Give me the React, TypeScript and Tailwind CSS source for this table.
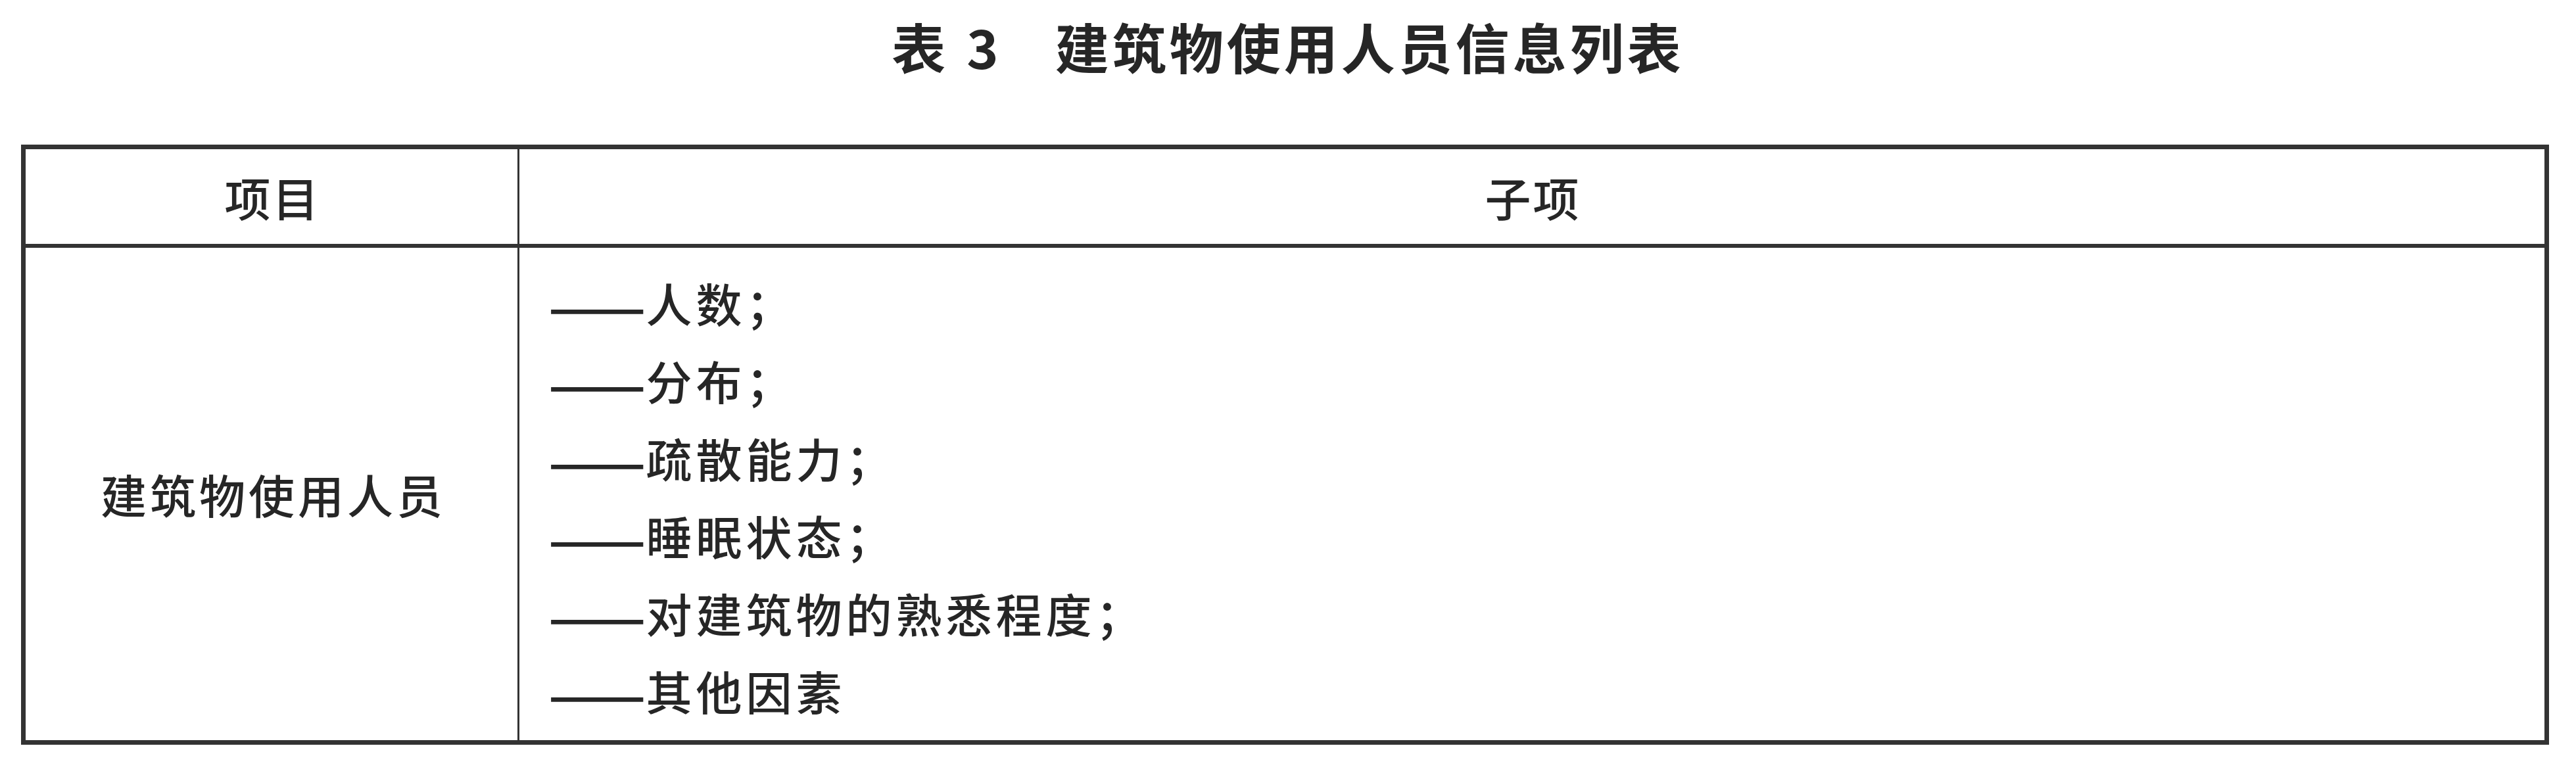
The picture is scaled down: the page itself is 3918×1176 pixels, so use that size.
const items = [
  "人数；",
  "分布；",
  "疏散能力；",
  "睡眠状态；",
  "对建筑物的熟悉程度；",
  "其他因素",
];

const cjk = "font-['Noto_Sans_CJK_SC','Noto_Sans',sans-serif]";

export default function App() {
  return (
    <div className={`w-[3918px] h-[1176px] bg-white text-[#262626] ${cjk} flex flex-col`}>
      {/* title */}
      <h1 className="h-[140px] flex items-center justify-center font-bold text-[82px] leading-none">
        <span>表</span>
        <span className="ml-[32px]">3</span>
        <span className="ml-[86px] tracking-[5px]">建筑物使用人员信息列表</span>
      </h1>

      {/* table */}
      <div className="mt-[80px] ml-[32px] w-[3845px] h-[913px] border-[7px] border-[#333] flex flex-col">
        <div className="h-[150px] flex border-b-[6px] border-[#333] text-[70px] font-medium tracking-[3px]">
          <div className="w-[751px] shrink-0 border-r-[3px] border-[#333] flex items-center justify-center pl-[3px]">
            项目
          </div>
          <div className="flex-1 flex items-center justify-center pl-[3px]">子项</div>
        </div>

        <div className="flex-1 flex text-[70px] font-medium">
          <div className="w-[751px] shrink-0 border-r-[3px] border-[#333] flex items-center justify-center tracking-[5px] pl-[5px]">
            建筑物使用人员
          </div>
          <div className="flex-1 flex flex-col justify-center pl-[44px] pt-[8px]">
            {items.map((t) => (
              <div key={t} className="h-[118px] flex items-center whitespace-nowrap leading-[84px]">
                <span className="text-[88px] tracking-normal">——</span>
                <span className="tracking-[6px]">{t}</span>
              </div>
            ))}
          </div>
        </div>
      </div>
    </div>
  );
}
